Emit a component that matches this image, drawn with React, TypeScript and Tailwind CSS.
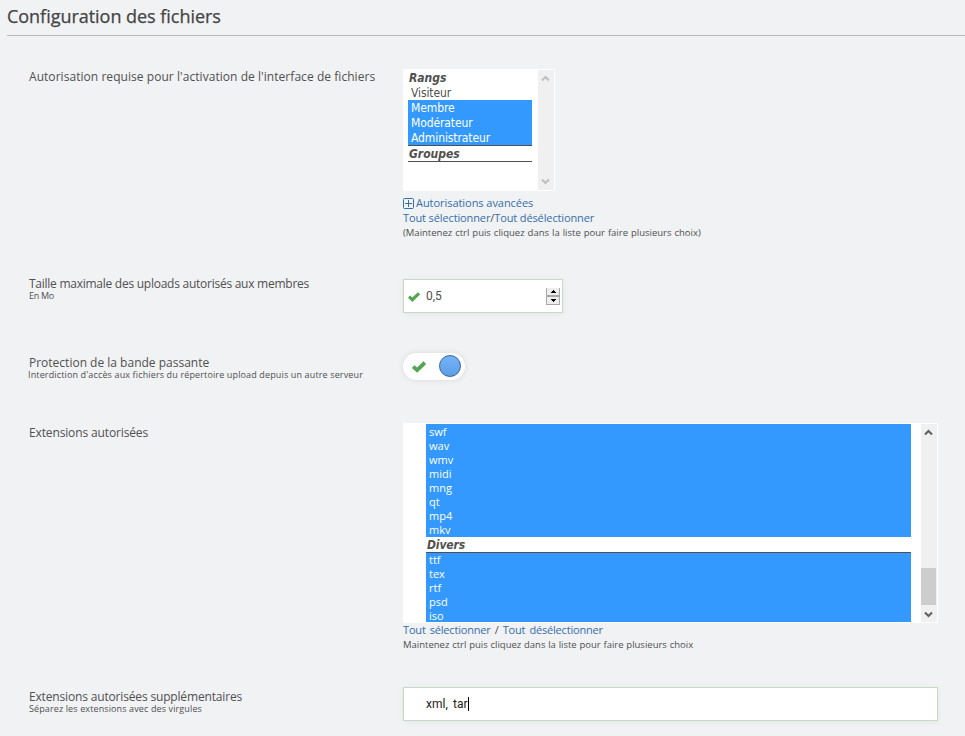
import type { ReactNode } from 'react';

function Label({ title, titleClass, note, noteClass, className }: {
  title: string;
  titleClass?: string;
  note?: string;
  noteClass?: string;
  className?: string;
}) {
  return (
    <div className={`w-[374px] shrink-0 whitespace-nowrap text-[12px] leading-[12px] ${className ?? ''}`}>
      <div className={titleClass}>{title}</div>
      {note && <div className={`text-[9px] ${noteClass ?? ''}`}>{note}</div>}
    </div>
  );
}

function Field({ className, children }: { className: string; children: ReactNode }) {
  return <div className={`flex pl-[29px] ${className}`}>{children}</div>;
}

function Check({ className }: { className: string }) {
  return (
    <svg viewBox="0 0 12 10" className={className} fill="none" stroke="#52a552" strokeWidth="3.2">
      <path d="M1 4.6 4.4 7.7 11 1.3" />
    </svg>
  );
}

function Arrow({ up, className }: { up?: boolean; className?: string }) {
  return (
    <svg width="9" height="7" viewBox="0 0 9 7" className={className} fill="none" stroke="currentColor" strokeWidth="2.1">
      <path d={up ? 'M1 5.4 4.5 2 8 5.4' : 'M1 1.6 4.5 5 8 1.6'} />
    </svg>
  );
}

const videoTypes = ['swf', 'wav', 'wmv', 'midi', 'mng', 'qt', 'mp4', 'mkv'];
const miscTypes = ['ttf', 'tex', 'rtf', 'psd', 'iso'];
const ranks = ['Membre', 'Modérateur', 'Administrateur'];

export default function App() {
  return (
    <div className="h-[736px] w-[965px] overflow-hidden bg-[#f0f2f4] font-['Open_Sans','Noto_Sans',sans-serif] text-[#505050]">
      <header className="ml-[7px] h-9 border-b border-[#b5b7b9]">
        <h1 className="whitespace-nowrap text-[18px] font-medium leading-[33px] tracking-[-0.03px] text-[#444444] [-webkit-text-stroke:0.25px_#444444]">
          Configuration des fichiers
        </h1>
      </header>

      <Field className="mt-[33px] h-[209px]">
        <Label
          className="pt-0.5"
          title="Autorisation requise pour l'activation de l'interface de fichiers"
          titleClass="tracking-[0.05px]"
        />
        <div className="whitespace-nowrap">
          <div className="flex h-[122px] w-[152px] border border-white bg-white font-['DejaVu_Sans_Condensed',sans-serif] text-[12px] leading-[15px]">
            <div className="ml-1 w-[124px]">
              <div className="h-[15px] pl-px font-bold italic leading-[17px]">Rangs</div>
              <div className="h-[15px] pl-[3px] leading-[17px] tracking-[-0.1px]">Visiteur</div>
              {ranks.map((rank) => (
                <div key={rank} className="h-[15px] bg-[#3399ff] pl-[3px] leading-[17px] tracking-[-0.1px] text-white">{rank}</div>
              ))}
              <div className="h-[17px] border-y border-[#505050] pl-px font-bold italic leading-[17px]">Groupes</div>
            </div>
            <div className="ml-auto flex w-4 flex-col items-center justify-between bg-[#f0f0f0] py-[5px] pr-[2px] text-[#bfbfbf]">
              <Arrow up />
              <Arrow />
            </div>
          </div>
          <div className="mt-1 flex items-center text-[11px] leading-[15px] text-[#366ea9]">
            <svg width="11" height="11" viewBox="0 0 11 11" className="mr-[2px] mt-0.5" fill="none" stroke="currentColor">
              <rect x="0.5" y="0.5" width="10" height="10" rx="1" />
              <path d="M2 5.5h7M5.5 2v7" />
            </svg>
            <span className="tracking-[-0.05px]">Autorisations avancées</span>
          </div>
          <div className="text-[11px] leading-[15px] tracking-[-0.12px] text-[#366ea9]">
            Tout sélectionner<span className="text-[#505050]">/</span>Tout désélectionner
          </div>
          <div className="text-[9.5px] leading-[16px] [word-spacing:0.5px]">
            (Maintenez ctrl puis cliquez dans la liste pour faire plusieurs choix)
          </div>
        </div>
      </Field>

      <Field className="h-[75px]">
        <Label
          title="Taille maximale des uploads autorisés aux membres"
          titleClass="tracking-[-0.256px]"
          note="En Mo"
          noteClass="tracking-[-0.275px]"
        />
        <div className="mt-px flex h-[34px] w-[160px] items-center border border-[#c6dac6] bg-white pl-1 pr-0.5 shadow-[0_1px_6px_rgba(0,0,0,0.06)]">
          <Check className="mt-0.5 h-[10px] w-[12px]" />
          <span className="ml-1.5 font-['Roboto',sans-serif] text-[12px]">0,5</span>
          <div className="ml-auto flex h-[17px] w-[14px] flex-col border border-t-0 border-[#a8a8a8] bg-[#eeeeee] text-black">
            <div className="flex h-[9px] items-center justify-center border-b-2 border-[#a8a8a8]">
              <svg width="5" height="3" viewBox="0 0 5 3" shapeRendering="crispEdges"><path d="M0 3V2H1V1H2V0H3V1H4V2H5V3z" /></svg>
            </div>
            <div className="flex h-[7px] items-center justify-center">
              <svg width="5" height="3" viewBox="0 0 5 3" shapeRendering="crispEdges"><path d="M0 0V1H1V2H2V3H3V2H4V1H5V0z" /></svg>
            </div>
          </div>
        </div>
      </Field>

      <Field className="h-[70px]">
        <Label
          className="pt-1"
          title="Protection de la bande passante"
          note="Interdiction d'accès aux fichiers du répertoire upload depuis un autre serveur"
          noteClass="tracking-[0.138px] -ml-px"
        />
        <div className="flex h-[27px] w-[62px] items-center justify-between rounded-full bg-white pl-[9px] pr-1 shadow-[0_0_6px_rgba(0,0,0,0.10)]">
          <Check className="h-[12px] w-[14px]" />
          <div className="mb-px h-[22px] w-[22px] rounded-full border border-[#36649b] bg-gradient-to-b from-[#74b4fb] to-[#5c9ee6]" />
        </div>
      </Field>

      <Field className="h-[264px]">
        <Label className="pt-[4px]" title="Extensions autorisées" titleClass="tracking-[-0.136px]" />
        <div className="whitespace-nowrap">
          <div className="flex h-[200px] w-[535px] overflow-hidden border border-white bg-white text-[11px] leading-[14px]">
            <div className="ml-[22px] h-[198px] w-[485px] overflow-hidden">
              <div className="bg-[#3399ff] pl-[3px] pt-px text-white">
                {videoTypes.map((type) => <div key={type}>{type}</div>)}
              </div>
              <div className="h-4 border-b border-[#505050] pl-px font-['DejaVu_Sans_Condensed',sans-serif] text-[12px] font-bold italic leading-[17px] tracking-[-0.13px]">
                Divers
              </div>
              <div className="bg-[#3399ff] pl-[3px] text-white">
                {miscTypes.map((type) => <div key={type}>{type}</div>)}
              </div>
            </div>
            <div className="ml-auto flex h-[198px] w-4 flex-col bg-[#f0f0f0] text-[#606060]">
              <Arrow up className="ml-[3px] mt-[5px] shrink-0" />
              <div className="mt-[132px] h-[37px] w-[15px] shrink-0 bg-[#cdcdcd]" />
              <Arrow className="ml-[3px] mt-[6px] shrink-0" />
            </div>
          </div>
          <div className="h-[15px] text-[11px] leading-[13px] tracking-[-0.18px] text-[#366ea9] [word-spacing:1.4px]">
            Tout sélectionner <span className="text-[#505050]">/</span> Tout désélectionner
          </div>
          <div className="text-[9.5px] leading-[13px] [word-spacing:0.3px]">
            Maintenez ctrl puis cliquez dans la liste pour faire plusieurs choix
          </div>
        </div>
      </Field>

      <Field className="h-[49px]">
        <Label
          className="pt-1"
          title="Extensions autorisées supplémentaires"
          titleClass="tracking-[-0.163px]"
          note="Séparez les extensions avec des virgules"
          noteClass="tracking-[0.118px]"
        />
        <div className="flex h-[34px] w-[535px] items-center border border-[#c6dac6] bg-white pl-[22px] text-[12px] text-[#222222] shadow-[0_1px_6px_rgba(0,0,0,0.06)]">
          <span className="font-['Roboto',sans-serif] tracking-[0.05px] [word-spacing:2px]">xml, tar</span>
          <span className="h-[14px] w-px bg-black" />
        </div>
      </Field>
    </div>
  );
}
